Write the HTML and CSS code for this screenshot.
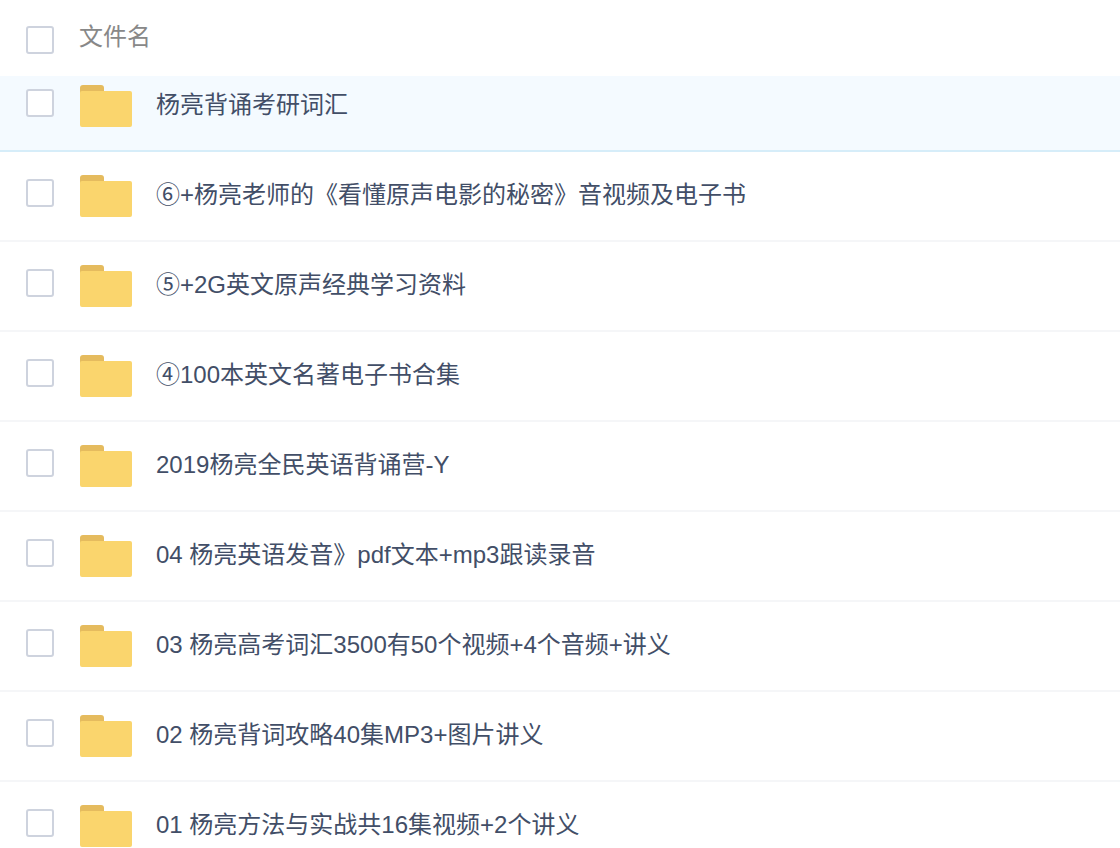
FILE: index.html
```html
<!DOCTYPE html>
<html lang="zh-CN">
<head>
<meta charset="utf-8">
<title>文件列表</title>
<link rel="stylesheet" href="styles.css">
</head>
<body>
<div class="page">
  <div class="header">
    <span class="checkbox"></span>
    <span class="header-name">文件名</span>
  </div>
  <div class="list">
    <div class="rows">
      <div class="row active"><span class="checkbox"></span><svg class="folder" viewBox="0 0 52 42"><path class="tab" d="M0 3a3 3 0 0 1 3-3h18a3 3 0 0 1 3 3v5H0z"/><path class="body" d="M0 8a2 2 0 0 1 2-2h22v0h26a2 2 0 0 1 2 2v32a2 2 0 0 1-2 2H2a2 2 0 0 1-2-2z"/></svg><span class="name">杨亮背诵考研词汇</span></div>
      <div class="row"><span class="checkbox"></span><svg class="folder" viewBox="0 0 52 42"><path class="tab" d="M0 3a3 3 0 0 1 3-3h18a3 3 0 0 1 3 3v5H0z"/><path class="body" d="M0 8a2 2 0 0 1 2-2h22v0h26a2 2 0 0 1 2 2v32a2 2 0 0 1-2 2H2a2 2 0 0 1-2-2z"/></svg><span class="name">⑥+杨亮老师的《看懂原声电影的秘密》音视频及电子书</span></div>
      <div class="row"><span class="checkbox"></span><svg class="folder" viewBox="0 0 52 42"><path class="tab" d="M0 3a3 3 0 0 1 3-3h18a3 3 0 0 1 3 3v5H0z"/><path class="body" d="M0 8a2 2 0 0 1 2-2h22v0h26a2 2 0 0 1 2 2v32a2 2 0 0 1-2 2H2a2 2 0 0 1-2-2z"/></svg><span class="name">⑤+2G英文原声经典学习资料</span></div>
      <div class="row"><span class="checkbox"></span><svg class="folder" viewBox="0 0 52 42"><path class="tab" d="M0 3a3 3 0 0 1 3-3h18a3 3 0 0 1 3 3v5H0z"/><path class="body" d="M0 8a2 2 0 0 1 2-2h22v0h26a2 2 0 0 1 2 2v32a2 2 0 0 1-2 2H2a2 2 0 0 1-2-2z"/></svg><span class="name">④100本英文名著电子书合集</span></div>
      <div class="row"><span class="checkbox"></span><svg class="folder" viewBox="0 0 52 42"><path class="tab" d="M0 3a3 3 0 0 1 3-3h18a3 3 0 0 1 3 3v5H0z"/><path class="body" d="M0 8a2 2 0 0 1 2-2h22v0h26a2 2 0 0 1 2 2v32a2 2 0 0 1-2 2H2a2 2 0 0 1-2-2z"/></svg><span class="name">2019杨亮全民英语背诵营-Y</span></div>
      <div class="row"><span class="checkbox"></span><svg class="folder" viewBox="0 0 52 42"><path class="tab" d="M0 3a3 3 0 0 1 3-3h18a3 3 0 0 1 3 3v5H0z"/><path class="body" d="M0 8a2 2 0 0 1 2-2h22v0h26a2 2 0 0 1 2 2v32a2 2 0 0 1-2 2H2a2 2 0 0 1-2-2z"/></svg><span class="name">04 杨亮英语发音》pdf文本+mp3跟读录音</span></div>
      <div class="row"><span class="checkbox"></span><svg class="folder" viewBox="0 0 52 42"><path class="tab" d="M0 3a3 3 0 0 1 3-3h18a3 3 0 0 1 3 3v5H0z"/><path class="body" d="M0 8a2 2 0 0 1 2-2h22v0h26a2 2 0 0 1 2 2v32a2 2 0 0 1-2 2H2a2 2 0 0 1-2-2z"/></svg><span class="name">03 杨亮高考词汇3500有50个视频+4个音频+讲义</span></div>
      <div class="row"><span class="checkbox"></span><svg class="folder" viewBox="0 0 52 42"><path class="tab" d="M0 3a3 3 0 0 1 3-3h18a3 3 0 0 1 3 3v5H0z"/><path class="body" d="M0 8a2 2 0 0 1 2-2h22v0h26a2 2 0 0 1 2 2v32a2 2 0 0 1-2 2H2a2 2 0 0 1-2-2z"/></svg><span class="name">02 杨亮背词攻略40集MP3+图片讲义</span></div>
      <div class="row"><span class="checkbox"></span><svg class="folder" viewBox="0 0 52 42"><path class="tab" d="M0 3a3 3 0 0 1 3-3h18a3 3 0 0 1 3 3v5H0z"/><path class="body" d="M0 8a2 2 0 0 1 2-2h22v0h26a2 2 0 0 1 2 2v32a2 2 0 0 1-2 2H2a2 2 0 0 1-2-2z"/></svg><span class="name">01 杨亮方法与实战共16集视频+2个讲义</span></div>
    </div>
  </div>
</div>
</body>
</html>
```

FILE: styles.css
```css
* { box-sizing: border-box; }
html, body { margin: 0; padding: 0; background: #fff; overflow: hidden; }
body { font-family: "Liberation Sans", "Noto Sans CJK SC", sans-serif; }
.page { width: 1120px; height: 848px; display: flex; flex-direction: column; overflow: hidden; }
.header { flex: none; height: 76px; display: flex; align-items: center; padding: 4px 0 0 26px; }
.header-name { margin: -6px 0 0 25px; font-size: 24px; line-height: 32px; color: #888; }
.list { flex: 1; overflow: hidden; }
.rows { margin-top: -14px; }
.row { height: 90px; display: flex; align-items: center; padding: 0 0 1px 26px; border-bottom: 2px solid #f5f6f8; }
.row.active { background: #f4faff; border-bottom-color: #d6edf9; }
.checkbox { flex: none; width: 28px; height: 28px; border: 2px solid #ced3de; border-radius: 3px; background: #fff; }
.row .checkbox { margin-top: -5px; }
.folder { flex: none; width: 52px; height: 42px; margin-left: 26px; }
.tab { fill: #e5bb5e; }
.body { fill: #fad56d; }
.name { margin: -2px 0 0 24px; font-size: 24px; line-height: 32px; color: #424e67; white-space: nowrap; }
```
